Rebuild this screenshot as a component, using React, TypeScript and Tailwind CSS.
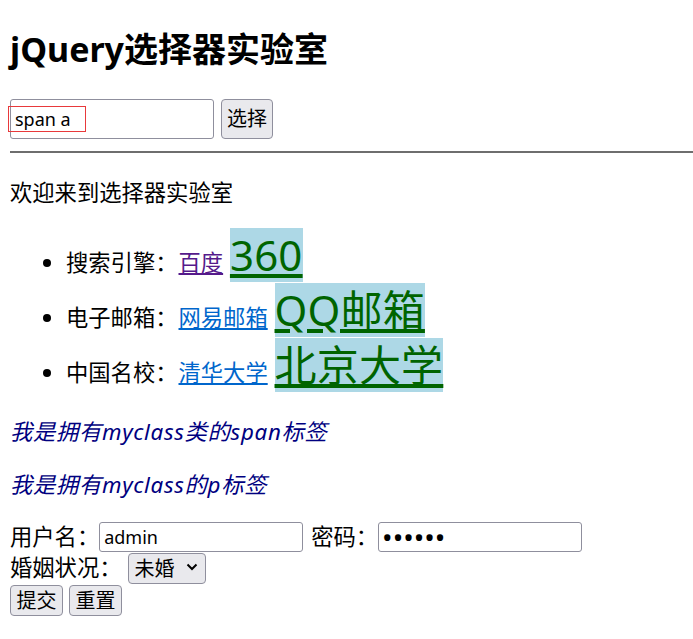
import { useState } from "react";

const links = [
  { label: "搜索引擎：", small: "百度", visited: true, big: "360" },
  { label: "电子邮箱：", small: "网易邮箱", visited: false, big: "QQ邮箱" },
  { label: "中国名校：", small: "清华大学", visited: false, big: "北京大学" },
];

const App = () => {
  const [query, setQuery] = useState("span a");
  const [user, setUser] = useState("admin");
  const [pwd, setPwd] = useState("123456");
  const [marry, setMarry] = useState("未婚");

  return (
    <div className="min-h-screen bg-white pl-[10px] pb-4 text-[22.3px] text-black font-['Noto_Sans','Noto_Sans_CJK_SC',sans-serif]">
      <h1 className="mt-[29px] mb-[30px] text-[34px] font-bold leading-[40px]">jQuery选择器实验室</h1>

      <div className="relative flex h-[40px] gap-[7px]">
        <input
          className="h-[40px] w-[204px] rounded-[3px] border border-[#8f8f9d] bg-white pl-[4px] text-[18px] outline-none"
          value={query}
          onChange={(e) => setQuery(e.target.value)}
        />
        <button className="h-[40px] w-[52px] rounded-[4px] border border-[#8f8f9d] bg-[#e9e9ed] text-[20px] leading-none">
          选择
        </button>
        <div className="pointer-events-none absolute left-[-2px] top-[7px] h-[26px] w-[78px] border border-[#e8393b]" />
      </div>

      <hr className="mt-[12px] h-0 border-0 border-t-2 border-[#6e6e6e]" />

      <p className="mt-[25px] leading-[30px]">欢迎来到选择器实验室</p>

      <ul className="mt-[20px] list-disc pl-[56px]">
        {links.map((item) => (
          <li key={item.big} className="h-[55px] leading-[30px]">
            {item.label}
            <a
              href="#"
              className={
                item.visited ? "ml-[1px] text-[#551a8b] underline" : "ml-[1px] text-[#0066cc] underline"
              }
            >
              {item.small}
            </a>{" "}
            <a
              href="#"
              className="ml-[1px] inline-block bg-[#add8e6] text-[42px] leading-[54px] tracking-[0.2px] text-[#006400] underline"
            >
              {item.big}
            </a>
          </li>
        ))}
      </ul>

      <p className="mt-[24px] italic leading-[30px] tracking-[0.7px] text-[#000080]">我是拥有myclass类的span标签</p>
      <p className="mt-[23px] italic leading-[30px] tracking-[0.7px] text-[#000080]">我是拥有myclass的p标签</p>

      <form className="mt-[22px]" onSubmit={(e) => e.preventDefault()}>
        <div className="flex h-[30px] items-center">
          <span>用户名：</span>
          <input
            className="h-[30px] w-[204px] rounded-[3px] border border-[#8f8f9d] bg-white pl-[4px] text-[18px] outline-none"
            value={user}
            onChange={(e) => setUser(e.target.value)}
          />
          <span className="ml-[8px]">密码：</span>
          <input
            type="password"
            className="h-[30px] w-[204px] rounded-[3px] border border-[#8f8f9d] bg-white pl-[3px] text-[28px] outline-none"
            value={pwd}
            onChange={(e) => setPwd(e.target.value)}
          />
        </div>
        <div className="flex h-[31px] items-center">
          <span>婚姻状况：</span>
          <div className="relative ml-[6px]">
            <select
              className="h-[31px] w-[78px] appearance-none rounded-[4px] border border-[#8f8f9d] bg-[#e9e9ed] pl-[6px] text-[20px] outline-none"
              value={marry}
              onChange={(e) => setMarry(e.target.value)}
            >
              <option>未婚</option>
              <option>已婚</option>
            </select>
            <svg
              className="pointer-events-none absolute right-[8px] top-[12px]"
              width="12"
              height="8"
              viewBox="0 0 12 8"
              fill="none"
            >
              <path d="M1.5 1.5l4.5 4.5 4.5-4.5" stroke="#000" strokeWidth="2" />
            </svg>
          </div>
        </div>
        <div className="mt-[2px] flex gap-[6px]">
          <button type="submit" className="h-[31px] w-[53px] rounded-[4px] border border-[#8f8f9d] bg-[#e9e9ed] text-[20px] leading-none">
            提交
          </button>
          <button type="reset" className="h-[31px] w-[53px] rounded-[4px] border border-[#8f8f9d] bg-[#e9e9ed] text-[20px] leading-none">
            重置
          </button>
        </div>
      </form>
    </div>
  );
};

export default App;
